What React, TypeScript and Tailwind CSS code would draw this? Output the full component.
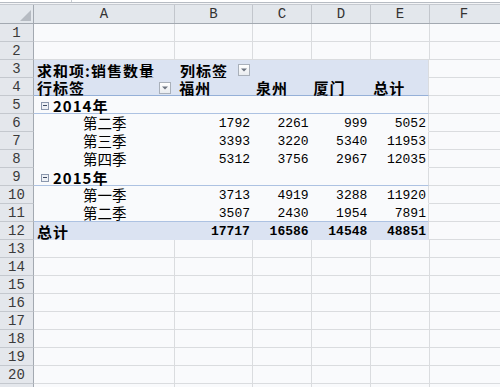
import React from 'react';

const cjk = { fontFamily: '"Noto Sans CJK SC", "Noto Sans", sans-serif' };
const mono = { fontFamily: '"Liberation Mono", "DejaVu Sans Mono", monospace' };

const widths = ['w-[141px]', 'w-[78px]', 'w-[59px]', 'w-[59px]', 'w-[59px]'];

const DropButton: React.FC = () => (
  <span className="w-[12px] h-[12px] border border-[#a9b0ba] bg-gradient-to-b from-white to-[#e9ecf0] flex items-center justify-center">
    <svg width="6" height="4" viewBox="0 0 6 4">
      <path d="M0 0.5 L6 0.5 L3 3.5 Z" fill="#6d7480" />
    </svg>
  </span>
);

const Collapse: React.FC = () => (
  <span className="w-[8px] h-[8px] border border-[#8b97ad] bg-[#eef1f6] flex items-center justify-center mr-[4px]">
    <span className="w-[4px] h-[1px] bg-[#3d4a63]" />
  </span>
);

type RowKind = 'group' | 'item' | 'total';

interface PivotRow {
  n: number;
  kind: RowKind;
  label: string;
  values?: string[];
  light?: boolean;
}

const rows: PivotRow[] = [
  { n: 5, kind: 'group', label: '2014年', light: true },
  { n: 6, kind: 'item', label: '第二季', values: ['1792', '2261', '999', '5052'] },
  { n: 7, kind: 'item', label: '第三季', values: ['3393', '3220', '5340', '11953'] },
  { n: 8, kind: 'item', label: '第四季', values: ['5312', '3756', '2967', '12035'] },
  { n: 9, kind: 'group', label: '2015年', light: true },
  { n: 10, kind: 'item', label: '第一季', values: ['3713', '4919', '3288', '11920'] },
  { n: 11, kind: 'item', label: '第二季', values: ['3507', '2430', '1954', '7891'], light: true },
  { n: 12, kind: 'total', label: '总计', values: ['17717', '16586', '14548', '48851'] },
];

const RowHead: React.FC<{ n: number }> = ({ n }) => (
  <div
    className="w-[34px] shrink-0 h-full bg-[#e4e7ec] border-r border-r-[#a3a9b1] border-b border-b-[#c4c8ce] flex items-center justify-center pt-[1px] text-[14px] text-[#3a3a3a]"
    style={mono}
  >
    {n}
  </div>
);

const EmptyRow: React.FC<{ n: number }> = ({ n }) => (
  <div className="flex h-[18px]">
    <RowHead n={n} />
    {widths.map((w, i) => (
      <div key={i} className={`${w} shrink-0 border-r border-b border-[#dadcdf]`} />
    ))}
    <div className="flex-1 border-b border-[#dadcdf]" />
  </div>
);

export default function App() {
  const letters = ['A', 'B', 'C', 'D', 'E'];
  const boldCjk = 'text-[15px] font-bold leading-none tracking-[1px]';
  return (
    <div className="w-[500px] h-[387px] overflow-hidden bg-[#f9fafc] text-black select-none">
      {/* formula bar edge */}
      <div className="flex h-[2px] bg-white">
        <div className="w-[72px] border-r border-[#c8ccd2]" />
      </div>
      <div className="h-[1px] bg-[#b7bcc3]" />
      <div className="h-[1px] bg-[#f4f5f7]" />
      <div className="h-[1px] bg-[#c6cad0]" />

      {/* column header */}
      <div className="flex h-[19px] bg-[#e3e7ec] border-b border-[#a3a9b1]">
        <div className="w-[34px] shrink-0 border-r border-[#a3a9b1] relative">
          <svg className="absolute right-[2px] bottom-[2px]" width="11" height="11" viewBox="0 0 11 11">
            <path d="M11 0 L11 11 L0 11 Z" fill="#b6bbc2" />
          </svg>
        </div>
        {letters.map((l, i) => (
          <div
            key={l}
            className={`${widths[i]} shrink-0 border-r border-[#c2c6cc] flex items-center justify-center text-[14px] text-[#333]`}
            style={mono}
          >
            {l}
          </div>
        ))}
        <div className="flex-1 flex items-center justify-center text-[14px] text-[#333]" style={mono}>
          <span className="-ml-[2px]">F</span>
        </div>
      </div>

      <EmptyRow n={1} />
      <EmptyRow n={2} />

      {/* row 3 */}
      <div className="flex h-[18px]">
        <RowHead n={3} />
        <div className={`w-[395px] shrink-0 bg-[#dbe3f2] border-r border-[#dadcdf] flex items-center pt-[2px] ${boldCjk}`} style={cjk}>
          <span className="w-[141px] pl-[3px]">求和项:销售数量</span>
          <span className="w-[78px] pl-[5px] flex items-center justify-between pr-[3px]">
            <span>列标签</span>
            <DropButton />
          </span>
        </div>
        <div className="flex-1 border-b border-[#dadcdf]" />
      </div>

      {/* row 4 */}
      <div className="flex h-[18px]">
        <RowHead n={4} />
        <div
          className={`w-[395px] shrink-0 bg-[#dbe3f2] border-r border-r-[#dadcdf] border-b border-b-[#95b0d8] flex items-center pt-[2px] ${boldCjk}`}
          style={cjk}
        >
          <span className="w-[141px] pl-[3px] pr-[3px] flex items-center justify-between">
            <span>行标签</span>
            <DropButton />
          </span>
          <span className="w-[78px] pl-[5px]">福州</span>
          <span className="w-[59px] pl-[4px]">泉州</span>
          <span className="w-[59px] pl-[3px]">厦门</span>
          <span className="w-[59px] pl-[4px]">总计</span>
        </div>
        <div className="flex-1 border-b border-[#dadcdf]" />
      </div>

      {rows.map((r) => {
        const line = r.light ? 'border-b-[#adc2e2]' : r.kind === 'total' ? 'border-b-[#dbe3f2]' : 'border-b-[#f9fafc]';
        const bg = r.kind === 'total' ? 'bg-[#dbe3f2]' : '';
        const bold = r.kind === 'total' ? 'font-bold' : '';
        return (
          <div key={r.n} className="flex h-[18px]">
            <RowHead n={r.n} />
            <div className={`w-[395px] shrink-0 flex items-center pt-[2px] border-r border-r-[#dadcdf] border-b ${line} ${bg}`}>
              {r.kind === 'group' && (
                <span className={`w-[141px] pl-[7px] flex items-center ${boldCjk}`} style={cjk}>
                  <Collapse />
                  <span>{r.label}</span>
                </span>
              )}
              {r.kind === 'item' && (
                <span className="w-[141px] pl-[49px] text-[14.5px] leading-none" style={cjk}>
                  {r.label}
                </span>
              )}
              {r.kind === 'total' && (
                <span className={`w-[141px] pl-[3px] ${boldCjk}`} style={cjk}>
                  {r.label}
                </span>
              )}
              {r.values &&
                r.values.map((v, i) => (
                  <span
                    key={i}
                    className={`${widths[i + 1]} text-right pr-[2px] text-[13px] leading-none ${bold}`}
                    style={mono}
                  >
                    {v}
                  </span>
                ))}
            </div>
            <div className="flex-1 border-b border-[#dadcdf]" />
          </div>
        );
      })}

      {Array.from({ length: 9 }, (_, i) => (
        <EmptyRow key={i} n={13 + i} />
      ))}
    </div>
  );
}
